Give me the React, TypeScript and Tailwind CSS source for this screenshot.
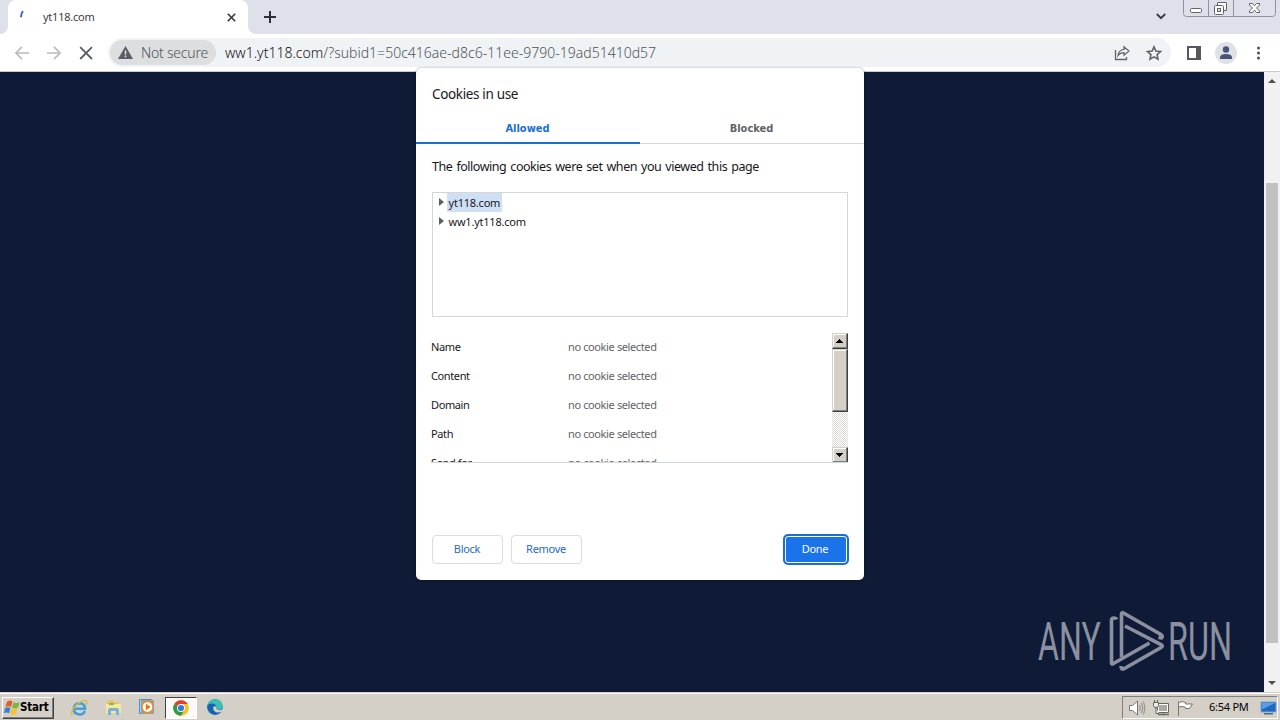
import type { ReactNode } from "react";

const cookieFields = ["Name", "Content", "Domain", "Path", "Send for"];

function TabStrip() {
  return (
    <div className="relative flex h-[34px] shrink-0 bg-[#dee1e9]">
      <div className="flex w-2 items-end bg-white">
        <div className="h-full w-2 rounded-br-lg bg-[#dee1e9]" />
      </div>
      <div className="flex w-60 bg-[#dee1e9]">
        <div className="flex h-[34px] w-60 items-center rounded-t-lg bg-white">
          <svg className="ml-[11px] h-4 w-4 shrink-0" viewBox="0 0 16 16" fill="none">
            <path d="M4 2.200Q1.800 4.500 2 8.200" stroke="#2f5fd0" strokeWidth="1.900" />
          </svg>
          <span className="ml-2 w-[184px] whitespace-nowrap text-[11px] tracking-[-0.24px] text-[#3c4043]">yt118.com</span>
          <svg className="h-[9px] w-[9px]" viewBox="0 0 9 9">
            <path d="M.8.8l7.400 7.400M8.200.8L.8 8.200" stroke="#33363a" strokeWidth="1.600" />
          </svg>
        </div>
      </div>
      <div className="w-2 bg-white">
        <div className="h-full w-2 rounded-bl-lg bg-[#dee1e9]" />
      </div>
      <svg className="ml-2 mt-[11px] h-3 w-3" viewBox="0 0 12 12">
        <path d="M6 0v12M0 6h12" stroke="#2d3035" strokeWidth="2" />
      </svg>
      <svg className="ml-auto mt-[13px] h-[7px] w-[10px]" viewBox="0 0 10 7">
        <path d="M.8 1l4.200 4.200L9.200 1" fill="none" stroke="#3a3d42" strokeWidth="1.900" />
      </svg>
      <svg className="ml-[17px] mr-[3px] h-[17px] w-[94px]" viewBox="0 0 94 17" fill="none">
        <path d="M.5 0v13.500q0 3 3 3h86q3 0 3-3V0M25.500 0v16M50.500 0v16" stroke="#8e929a" />
        <rect x="7.500" y="8.500" width="11" height="4" rx="1" fill="#fff" stroke="#60646c" />
        <path d="M34.500 5.500V3q0-.5.500-.5h8q.5 0 .5.500v7.500h-3" fill="#fff" stroke="#60646c" />
        <rect x="31.500" y="5.500" width="9" height="9" rx="1" fill="#fff" stroke="#60646c" />
        <rect x="34.500" y="8.500" width="3" height="3" fill="#dee1e9" stroke="#60646c" />
        <path d="M66.500 3.500h3l2 2.300 2-2.300h3v1.500l-3 3 3 3v1.500h-3l-2-2.300-2 2.300h-3V11l3-3-3-3z" fill="#fff" stroke="#60646c" />
      </svg>
    </div>
  );
}

function Toolbar() {
  return (
    <div className="flex h-[38px] shrink-0 items-center border-b border-[#c9cacc] bg-white">
      <svg className="ml-[15px] h-[14px] w-[80px] shrink-0" viewBox="0 0 80 14" fill="none">
        <path d="M14 7H1M7 .8L.9 7 7 13.200" stroke="#b9bbbe" strokeWidth="1.700" />
        <path d="M32 7h13M39 .8L45.100 7 39 13.200" stroke="#b9bbbe" strokeWidth="1.700" />
        <path d="M65.200 1.200L77 13M77 1.200L65.200 13" stroke="#5b5e62" strokeWidth="1.800" />
      </svg>
      <div className="ml-[13px] flex h-[29px] w-[1063px] items-center rounded-full bg-[#f0f3f6] font-light">
        <div className="ml-[2px] flex h-[25px] w-[106px] shrink-0 items-center rounded-full bg-[#dcdee0]">
          <svg className="ml-[8px] h-[13px] w-[15px]" viewBox="0 0 15 13">
            <path d="M7.500 0L15 13H0z" fill="#5a5d61" />
            <path d="M7.500 4.500v4M7.500 9.600v1.600" stroke="#e4e5e7" strokeWidth="1.500" />
          </svg>
          <span className="ml-[8px] whitespace-nowrap text-[14px] tracking-[-0.22px] text-[#4f5358]">Not secure</span>
        </div>
        <div className="ml-[9px] whitespace-nowrap text-[14px] tracking-[0.01px] text-[#4f5358]">
          <span className="text-[#101114]">ww1.yt118.com</span>
          <span>/?subid1=50c416ae-d8c6-11ee-9790-19ad51410d57</span>
        </div>
        <svg className="ml-auto mr-[7px] h-4 w-[50px] shrink-0" viewBox="0 0 50 16" fill="none" stroke="#5f6368">
          <path d="M1.500 5v9.500h11V12" strokeWidth="1.300" />
          <path d="M4 10.500Q4.500 5 10 4.500V1.800l5 4.200-5 4.200V7.600Q6 7.600 4 10.500z" strokeWidth="1.200" />
          <path d="M40 1.800l1.900 4.200 4.600.5-3.400 3.100.9 4.500-4-2.300-4 2.300.9-4.500L33.500 6.500l4.600-.5z" strokeWidth="1.600" />
        </svg>
      </div>
      <svg className="ml-[16px] h-[14px] w-[14px]" viewBox="0 0 14 14">
        <path d="M1 1h12v12H1z" fill="#fff" stroke="#55585d" strokeWidth="2" />
        <path d="M9 0h5v14H9z" fill="#55585d" />
      </svg>
      <svg className="ml-[14px] h-[22px] w-[22px]" viewBox="0 0 22 22">
        <circle cx="11" cy="11" r="11" fill="#dee1e6" />
        <circle cx="11" cy="7.500" r="3.200" fill="#4a5575" />
        <path d="M5 17v-1.500Q5 12 11 12t6 3.500V17z" fill="#4a5575" />
      </svg>
      <svg className="ml-[20px] h-[14px] w-1" viewBox="0 0 4 14" fill="#4c4f53">
        <circle cx="1.500" cy="2" r="1.500" />
        <circle cx="1.500" cy="7" r="1.500" />
        <circle cx="1.500" cy="12" r="1.500" />
      </svg>
    </div>
  );
}

function Watermark() {
  return (
    <div className="flex h-[62px] w-[194px] items-center font-['Roboto'] text-[54px] leading-[62px] text-[#8b90a0]">
      <div className="w-[64px] shrink-0 pt-px"><span className="block w-max origin-left scale-x-[0.595]">ANY</span></div>
      <svg className="ml-[7px] h-[62px] w-[56px] shrink-0" viewBox="0 0 56 62" fill="none" stroke="#8b90a0" strokeWidth="3.600" strokeLinejoin="round">
        <path d="M7.500 9.500Q7 8 5 8q-2.500 0-2.500 2.500V53q0 1.500 1.500.8L40.500 33" />
        <path d="M12.500 47V4q0-2 2-1L52 24.500q2.200 1.800.5 3.500l-3-.8" />
        <path d="M16 16l36.500 18.800q1.500 1.200 0 2.400L15 58.800q-3 1-3-2.800" />
      </svg>
      <div className="ml-[3px] w-[62px] shrink-0 pt-px"><span className="block w-max origin-left scale-x-[0.60]">RUN</span></div>
    </div>
  );
}

function PageScrollbar() {
  return (
    <div className="flex w-4 flex-col items-center bg-[#f1f1f1]">
      <svg className="mt-[7px] h-1 w-2" viewBox="0 0 8 4"><path d="M4 0l4 4H0z" fill="#505050" /></svg>
      <div className="mt-[100px] h-[460px] w-3 bg-[#c1c1c1]" />
      <svg className="mb-[7px] mt-auto h-1 w-2" viewBox="0 0 8 4"><path d="M0 0h8L4 4z" fill="#505050" /></svg>
    </div>
  );
}

function ScrollButton({ down = false }: { down?: boolean }) {
  return (
    <div className="flex h-4 w-4 shrink-0 items-center justify-center border border-b-[#404040] border-l-[#d4d0c8] border-r-[#404040] border-t-[#d4d0c8] bg-[#d4d0c8] pr-px shadow-[inset_-1px_-1px_#808080,inset_1px_1px_#fff]">
      <svg className="h-1 w-[7px]" viewBox="0 0 7 4" shapeRendering="crispEdges">
        <path d={down ? "M0 0h7v1H6v1H5v1H4v1H3V3H2V2H1V1H0z" : "M3 0h1v1h1v1h1v1h1v1H0V3h1V2h1V1h1z"} fill="#000" />
      </svg>
    </div>
  );
}

function CookieRow({ selected = false, children }: { selected?: boolean; children: ReactNode }) {
  return (
    <div className="flex h-[19px] items-center tracking-[-0.22px]">
      <svg className="mb-px ml-[6px] mr-[3px] h-2 w-[5px]" viewBox="0 0 5 8"><path d="M0 0l5 4-5 4z" fill="#5d6063" /></svg>
      <span className={selected ? "flex h-[19px] w-[55px] items-center bg-[#cfdff6] pl-[1.5px] pt-[2px]" : "flex h-[19px] items-center pl-[1.5px] pt-[2px]"}>
        {children}
      </span>
    </div>
  );
}

function CookieDialog() {
  return (
    <div className="absolute left-[416px] top-[68px] flex h-[512px] w-[448px] flex-col rounded-[5px] bg-white text-[11px] text-[#17181b] shadow-[0_0_2px_rgba(0,0,0,0.5)]">
      <h1 className="mt-4 pl-4 text-[13.5px] leading-5 tracking-[-0.35px]">Cookies in use</h1>
      <div className="mt-2 flex h-8 border-b border-[#d5d6d8] font-['DejaVu_Sans_Condensed','DejaVu_Sans',sans-serif] font-bold leading-[33px]">
        <div className="h-8 w-56 border-b-2 border-[#1a6fd4] pr-px text-center text-[#1a6fd4]">Allowed</div>
        <div className="h-8 w-56 pr-px text-center text-[#5f6368]">Blocked</div>
      </div>
      <p className="mt-3 whitespace-nowrap pl-4 text-[12.5px] leading-[22px] tracking-[-0.46px] [word-spacing:0.1em]">The following cookies were set when you viewed this page</p>
      <div className="ml-4 mt-[14px] h-[125px] w-[416px] shrink-0 border border-[#d5d6d8]">
        <CookieRow selected>yt118.com</CookieRow>
        <CookieRow>ww1.yt118.com</CookieRow>
      </div>
      <div className="ml-[15px] mt-4 flex h-[130px] w-[417px] shrink-0 overflow-hidden border-b border-[#d5d6d8]">
        <div className="h-[129px] flex-1 overflow-hidden tracking-[-0.38px]">
          {cookieFields.map((field) => (
            <div key={field} className="flex h-[29px] items-center">
              <span className="w-[137px]">{field}</span>
              <span className="text-[#5f6368]">no cookie selected</span>
            </div>
          ))}
        </div>
        <div className="flex h-[130px] w-4 flex-col bg-[#f7f6f4] [background-image:repeating-conic-gradient(#dedad3_0_25%,#fff_0_50%)] [background-size:2px_2px]">
          <ScrollButton />
          <div className="h-[63px] border border-b-[#404040] border-l-[#d4d0c8] border-r-[#404040] border-t-[#d4d0c8] bg-[#d4d0c8] shadow-[inset_-1px_-1px_#808080,inset_1px_1px_#fff]" />
          <div className="flex-1" />
          <ScrollButton down />
        </div>
      </div>
      <div className="ml-4 mr-[15px] mt-[71px] flex h-[31px] items-center tracking-[-0.3px] text-[#276bc5]">
        <button className="h-[29px] w-[71px] rounded-[4px] border border-[#dadce0] pr-px">Block</button>
        <button className="ml-2 h-[29px] w-[71px] rounded-[4px] border border-[#dadce0] pr-px">Remove</button>
        <button className="ml-auto h-[31px] w-[66px] rounded-[5px] border-2 border-[#1a6fd4] bg-[#1a73e8] pr-[2px] text-white shadow-[inset_0_0_0_1px_#fff]">Done</button>
      </div>
    </div>
  );
}

function InternetExplorerIcon() {
  return (
    <svg className="h-[18px] w-[18px]" viewBox="0 0 18 18" fill="none">
      <path d="M15 12Q13.500 15.500 9.500 15.500 4 15 3.700 10 4 4.500 9.500 4.200q5.500.3 5.500 5.600H5" stroke="#3f9fdb" strokeWidth="2.600" />
      <path d="M2.500 16.500Q-.5 14 5 7.500 11 1 15.500 1.700q2.200.6.600 4" stroke="#e0b63e" strokeWidth="1.400" />
    </svg>
  );
}

function ExplorerIcon() {
  return (
    <svg className="h-[17px] w-[17px]" viewBox="0 0 17 17">
      <path d="M2 3l1-2h5l1 2h5v11H2z" fill="#e9c566" />
      <path d="M1 5h15v9H1z" fill="#f7e5a0" />
      <path d="M4 4h5v2H4z" fill="#6fb86a" />
      <path d="M3 16V11q0-2 2-2h7q2 0 2 2v5h-3v-4H6v4z" fill="#77b4d6" />
    </svg>
  );
}

function MediaIcon() {
  return (
    <svg className="h-4 w-4" viewBox="0 0 16 16">
      <path d="M.5.500h12v14H.5z" fill="#a8cdea" stroke="#4f91c4" />
      <path d="M2.500 1.500h12v13h-12z" fill="#f08a1d" stroke="#7ba6c8" />
      <circle cx="8.500" cy="8" r="4.800" fill="#fff" />
      <path d="M6.800 4.800v6.400L11.800 8z" fill="#e5760a" />
    </svg>
  );
}

function ChromeIcon() {
  return (
    <svg className="h-4 w-4" viewBox="0 0 16 16">
      <circle cx="8" cy="8" r="7.800" fill="#fbc116" />
      <path d="M8 8L1.250 4.100A7.800 7.800 0 0 1 14.750 4.100H8z" fill="#df3e30" />
      <path d="M8 8L1.250 4.100A7.800 7.800 0 0 0 8 15.800L11.400 10z" fill="#2a9a4b" />
      <circle cx="8" cy="8" r="4" fill="#fff" />
      <circle cx="8" cy="8" r="3.100" fill="#3977e3" />
    </svg>
  );
}

function EdgeIcon() {
  return (
    <svg className="h-4 w-4" viewBox="0 0 16 16">
      <circle cx="8" cy="8" r="7.800" fill="#1677bd" />
      <path d="M.3 7Q1 .4 8 .2q7.500.5 7.700 6.800-.2 3.500-4 3.700-3 0-2.300-1.700Q9.500 5 6 4.700 2 4.500.3 7z" fill="#3dbdb4" />
      <path d="M6.500 7.500Q5.500 12 9.800 13.500q3 .5 5.200-1.500l1-2q-2 1.500-4.500 1-2.500-.5-2.300-2L9 7.500z" fill="#d4d0c8" />
      <path d="M.3 7Q1.700 4.500 5 4.600q3 .1 4 2.400-2-1-3 1T7 12.500q3 2.500 7.500.5Q11 16.500 6.500 15.600.2 13.500.3 7z" fill="#1565b3" />
    </svg>
  );
}

function Taskbar() {
  return (
    <div className="flex h-[28px] shrink-0 items-center border-t border-[#d4d0c8] bg-[#d4d0c8] text-black shadow-[inset_0_1px_#fff]">
      <div className="ml-[2px] mt-[2px] flex h-[22px] w-[52px] items-center border border-b-[#404040] border-l-white border-r-[#404040] border-t-white shadow-[inset_-1px_-1px_#808080]">
        <svg className="ml-px h-4 w-4" viewBox="0 0 16 16">
          <path d="M3.200 1.500q3-2 5.300 0L7 7Q4 5.300 1.300 7z" fill="#e65a28" />
          <path d="M9.300 2.200q2.700 1.500 6.400 0L14 7.700q-3 1.500-6 0z" fill="#76b83f" />
          <path d="M1 8q2.700-1.500 5.500 0L5 13.300q-2.700-1.500-5 0z" fill="#3c7dd0" />
          <path d="M7.500 8.500q2.700 1.500 6 0L12 14q-3 1.500-6 0z" fill="#f6c32c" />
        </svg>
        <span className="whitespace-nowrap pt-px font-['DejaVu_Sans_Condensed','DejaVu_Sans',sans-serif] text-[11.500px] font-bold tracking-[-0.2px]">Start</span>
      </div>
      <div className="ml-[16px] mt-[2px] flex w-[18px] justify-center"><InternetExplorerIcon /></div>
      <div className="ml-[16px] mt-[2px] flex w-[18px] justify-center"><ExplorerIcon /></div>
      <div className="ml-[16px] flex w-[18px] justify-center"><MediaIcon /></div>
      <div className="ml-[9px] mt-[2px] flex h-[22px] w-[32px] items-center justify-center border border-b-white border-l-[#404040] border-r-white border-t-[#404040] bg-[#fbfaf9]"><ChromeIcon /></div>
      <div className="ml-[10px]"><EdgeIcon /></div>
      <div className="ml-auto mr-[2px] mt-[2px] flex h-[23px] w-[156px] items-center border border-b-white border-l-[#808080] border-r-white border-t-[#808080]">
        <svg className="ml-[6px] h-[18px] w-[66px]" viewBox="0 0 66 18" fill="none">
          <path d="M.5 6.500h3L8.500 2v14l-5-4.500h-3z" fill="#fff" stroke="#77756f" />
          <path d="M10.500 6q1.500 3 0 6M12.500 4q2.500 5 0 10M14.500 2.500q3 6.500 0 13" stroke="#8c8a85" />
          <path d="M28.500 4.500h11v9h-11z" fill="#aaa9a5" stroke="#696762" />
          <path d="M29.500 5.500h9v7h-9z" stroke="#fff" />
          <path d="M29 15.500h11M34.500 13.500v1" stroke="#696762" strokeWidth="1.500" />
          <path d="M24.500 3.500h5v3q0 2-2.500 2t-2.500-2zM25.500 3.500V1M28.500 3.500V1M27 8.500v6h3" fill="#eee" stroke="#696762" />
          <path d="M49.500 17V2.500M49.500 3.500q4-2 7 0v1.500h7l-3 4.500h-4l-.5-1.500q-3-1-6.500 0z" fill="#fff" stroke="#77756f" />
        </svg>
        <span className="ml-[14px] whitespace-nowrap text-[11px] tracking-[-0.25px]">6:54 PM</span>
        <svg className="ml-auto h-[14px] w-[17px]" viewBox="0 0 17 14">
          <path d="M1 1h15v10H1z" fill="#2468bd" stroke="#6fa9dc" />
          <path d="M2 2h13L3 8H2z" fill="#5c9ee2" />
          <path d="M4 12h9v1.500H4z" fill="#5b6570" />
        </svg>
      </div>
    </div>
  );
}

export default function App() {
  return (
    <div className="relative flex h-[720px] w-[1280px] flex-col overflow-hidden bg-white font-['Noto_Sans',sans-serif]">
      <TabStrip />
      <Toolbar />
      <div className="flex h-[620px] shrink-0">
        <main className="flex flex-1 items-end justify-end bg-[#0f1b36] pb-5 pr-[32px]">
          <Watermark />
        </main>
        <PageScrollbar />
      </div>
      <Taskbar />
      <CookieDialog />
    </div>
  );
}
